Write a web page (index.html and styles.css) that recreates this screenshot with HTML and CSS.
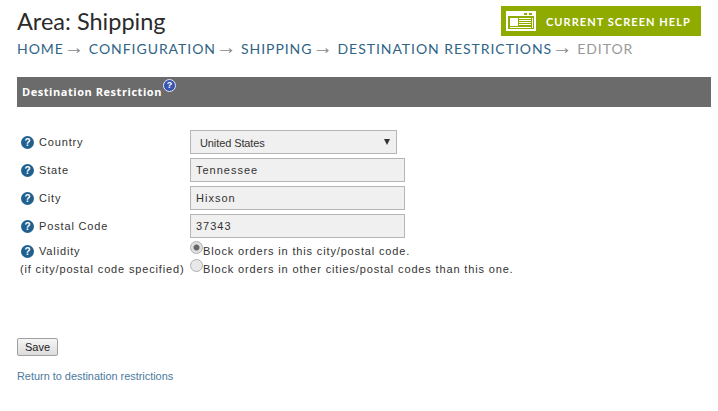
FILE: index.html
```html
<!DOCTYPE html>
<html lang="en">
<head>
    <meta charset="UTF-8">
    <title>Area: Shipping</title>
    <link rel="stylesheet" href="styles.css">
</head>
<body>
    <div class="top">
        <h1>Area: Shipping</h1>
        <a class="help-btn" href="#">
            <svg class="help-icon" width="30" height="20" viewBox="0 0 30 20">
                <path fill="#fff" fill-rule="evenodd" d="M0 0H30V20H0ZM2 5V18H28V5Z"/>
                <rect x="18" y="2" width="3" height="2" fill="#8fab00"/>
                <rect x="23" y="2" width="3" height="2" fill="#8fab00"/>
                <path fill="#fff" d="M4 7H12V15H4ZM13 7H25V8H13ZM13 9H25V10H13ZM13 11H25V12H13ZM13 13H25V14H13ZM4 16H25V17H4ZM26 7H27V17H26Z"/>
            </svg>
            <span>CURRENT SCREEN HELP</span>
        </a>
    </div>

    <div class="crumbs">
        <a href="#">HOME</a><span class="arrow">&rarr;</span>
        <a href="#">CONFIGURATION</a><span class="arrow">&rarr;</span>
        <a href="#">SHIPPING</a><span class="arrow">&rarr;</span>
        <a href="#">DESTINATION RESTRICTIONS</a><span class="arrow">&rarr;</span>
        <span class="current">EDITOR</span>
    </div>

    <div class="section-bar">
        <span>Destination Restriction</span>
        <span class="bar-help">?</span>
    </div>

    <form class="edit-form">
        <div class="row row-select">
            <label><span class="q">?</span>Country</label>
            <div class="fake-select">United States<span class="caret"></span></div>
        </div>
        <div class="row">
            <label><span class="q">?</span>State</label>
            <input type="text" value="Tennessee">
        </div>
        <div class="row">
            <label><span class="q">?</span>City</label>
            <input type="text" value="Hixson">
        </div>
        <div class="row">
            <label><span class="q">?</span>Postal Code</label>
            <input type="text" value="37343">
        </div>
        <div class="row row-radio">
            <label><span class="q">?</span>Validity</label>
            <div class="radio-line"><span class="radio checked"></span>Block orders in this city/postal code.</div>
        </div>
        <div class="row row-radio2">
            <label class="note">(if city/postal code specified)</label>
            <div class="radio-line"><span class="radio"></span>Block orders in other cities/postal codes than this one.</div>
        </div>
        <button type="button" class="save-btn">Save</button>
    </form>

    <a class="back-link" href="#">Return to destination restrictions</a>
</body>
</html>
```

FILE: styles.css
```css
body {
    margin: 0;
    padding: 0 7px 0 17px;
    font-family: "Liberation Sans", Arial, sans-serif;
    font-size: 11px;
    color: #333;
    background: #fff;
}

a {
    text-decoration: none;
}

.top {
    display: flex;
    justify-content: space-between;
    align-items: flex-start;
    padding: 6px 10px 0 0;
    height: 36px;
}

.top h1 {
    margin: 0;
    font-family: Lato, sans-serif;
    font-size: 23.5px;
    font-weight: 400;
    line-height: 30px;
    color: #2b2b2b;
}

.help-btn {
    display: flex;
    align-items: center;
    width: 200px;
    height: 30px;
    padding-left: 5px;
    box-sizing: border-box;
    background: #8fab00;
    color: #fff;
    font-family: Lato, sans-serif;
    font-size: 11px;
    font-weight: 700;
    letter-spacing: 1.05px;
    white-space: nowrap;
}

.help-icon {
    margin-right: 10px;
}

.crumbs {
    margin-top: -2px;
    font-family: Lato, sans-serif;
    font-size: 14px;
    line-height: 18px;
    letter-spacing: 0.95px;
    color: #999;
    white-space: nowrap;
}

.crumbs a {
    color: #2f6486;
}

.arrow {
    font-family: "Liberation Sans", sans-serif;
    font-size: 20.5px;
    line-height: 0;
    letter-spacing: 0;
    color: #888;
}

.current {
    color: #999;
}

.section-bar {
    display: flex;
    align-items: flex-start;
    height: 30px;
    margin-top: 19px;
    padding-left: 5px;
    background: #6b6b6b;
    color: #fff;
    font-family: "Open Sans", sans-serif;
    font-size: 11px;
    font-weight: 700;
    letter-spacing: 0.55px;
    line-height: 30px;
}

.bar-help {
    width: 11px;
    height: 11px;
    margin: 2px 0 0 1px;
    border-radius: 50%;
    background: #3a55b0;
    border: 1px solid #dfe6ff;
    font-family: "Liberation Sans", sans-serif;
    font-size: 9px;
    line-height: 11px;
    letter-spacing: 0;
    text-align: center;
}

.edit-form {
    margin-top: 23px;
}

.row {
    display: flex;
    align-items: center;
    height: 24px;
    margin-bottom: 4px;
    letter-spacing: 0.85px;
}

.row label {
    display: flex;
    align-items: center;
    width: 173px;
    padding-left: 4px;
    box-sizing: border-box;
    flex-shrink: 0;
}

.q {
    width: 13px;
    height: 13px;
    margin-right: 5px;
    border-radius: 50%;
    background: #20608f;
    color: #fff;
    font-size: 10px;
    font-weight: 700;
    line-height: 13px;
    letter-spacing: 0;
    text-align: center;
}

.row input,
.fake-select {
    height: 24px;
    box-sizing: border-box;
    border: 1px solid #b5b5b5;
    background: #f0f0f0;
    color: #333;
    font-family: "Liberation Sans", sans-serif;
    font-size: 11px;
}

.row input {
    width: 215px;
    padding: 0 5px;
    letter-spacing: 1px;
}

.fake-select {
    position: relative;
    width: 207px;
    padding-left: 9px;
    line-height: 24px;
    letter-spacing: -0.1px;
}

.caret {
    position: absolute;
    top: 8px;
    right: 6px;
    border-left: 3.5px solid transparent;
    border-right: 3.5px solid transparent;
    border-top: 6px solid #333;
}

.row-radio {
    height: 14px;
    margin: 6px 0 4px;
}

.row-radio2 {
    height: 14px;
    margin: 0;
}

.row .note {
    padding-left: 3px;
}

.radio-line {
    display: flex;
    align-items: center;
    white-space: nowrap;
}

.radio {
    width: 13px;
    height: 13px;
    margin-top: -8px;
    box-sizing: border-box;
    border: 1px solid #b0b0b0;
    border-radius: 50%;
    background: #e8e8e8;
}

.radio.checked {
    background: radial-gradient(circle, #666 0 2.5px, #e0e0e0 3.5px);
}

.save-btn {
    display: block;
    width: 41px;
    height: 18px;
    margin-top: 62px;
    padding: 0;
    border: 1px solid #a0a0a0;
    border-radius: 2px;
    background: linear-gradient(#f6f6f6, #dcdcdc);
    color: #222;
    font-family: "Liberation Sans", sans-serif;
    font-size: 11px;
}

.back-link {
    display: block;
    margin-top: 14px;
    color: #4a7a9f;
    font-size: 10.9px;
    line-height: 13px;
}
```
